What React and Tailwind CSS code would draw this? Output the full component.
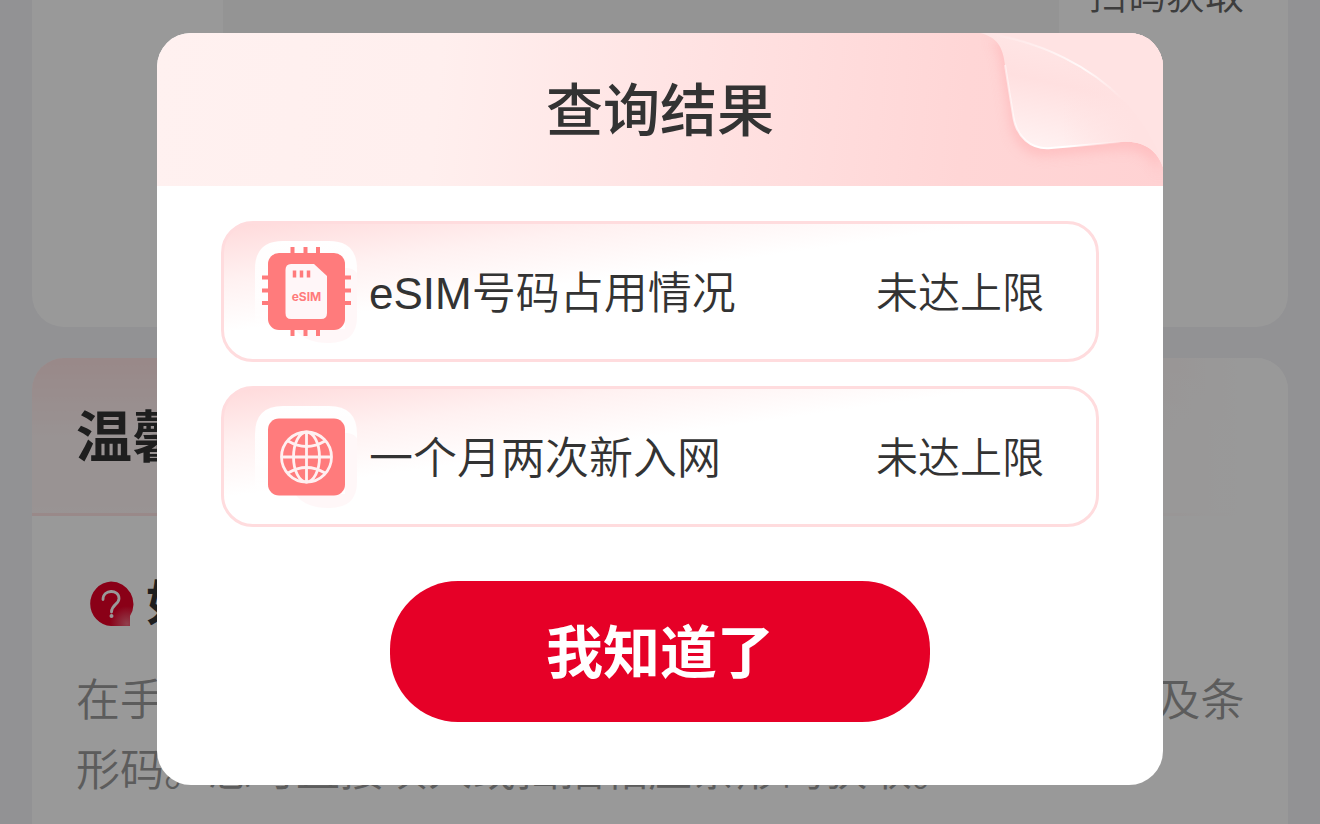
import React, { useState } from 'react';

const results = [
  { id: 'esim', label: 'eSIM号码占用情况', status: '未达上限', Icon: EsimIcon },
  { id: 'network', label: '一个月两次新入网', status: '未达上限', Icon: GlobeIcon },
];

function IconPlate() {
  return (
    <>
      <path d="M28 0H74Q102 0 102 28V76Q102 102 74 102H28Q0 102 0 76V28Q0 0 28 0Z" fill="url(#plate)" />
      <path d="M90 27Q98 27 102 32V76Q102 102 74 102Q50 102 40 88H90Z" fill="#ffeff1" opacity="0.5" />
    </>
  );
}

function EsimIcon() {
  return (
    <svg viewBox="0 0 102 102" className="size-[102px] shrink-0" aria-hidden="true">
      <defs>
        <linearGradient id="plate" x1="0" y1="0" x2="0" y2="1">
          <stop offset="0" stopColor="#fff" />
          <stop offset="0.55" stopColor="#fff" stopOpacity="0.85" />
          <stop offset="1" stopColor="#fff" stopOpacity="0" />
        </linearGradient>
      </defs>
      <IconPlate />
      <g stroke="#ff7b7c" strokeWidth="4">
        <path d="M37.5 6v89M50.5 6v89M63 6v89" />
        <path d="M7 36.5h89M7 49.5h89M7 62h89" />
      </g>
      <rect x="13" y="12" width="77" height="77" rx="11" fill="#ff7b7c" />
      <path d="M36 23H59L72 35V72Q72 78 66 78H36Q30.500 78 30.500 72V29Q30.500 23 36 23Z" fill="#fff6f8" />
      <path d="M39.500 29.500v7M46.500 29.500v7M53.500 29.500v7" stroke="#ff7b7c" strokeWidth="3.500" />
      <text x="51.500" y="60" textAnchor="middle" fill="#ff7b7c" fontSize="12" fontWeight="700" fontFamily="Inter, sans-serif">
        eSIM
      </text>
    </svg>
  );
}

function GlobeIcon() {
  return (
    <svg viewBox="0 0 102 102" className="size-[102px] shrink-0" aria-hidden="true">
      <IconPlate />
      <rect x="13" y="12.500" width="77" height="77" rx="11" fill="#ff7b7c" />
      <g fill="none" stroke="#fff0f1" strokeWidth="2.800">
        <circle cx="51.500" cy="51" r="25" />
        <ellipse cx="51.500" cy="51" rx="13" ry="25" />
        <path d="M51.500 26v50M26.500 51h50" />
        <path d="M33 35Q51.500 46 70 35M33 67Q51.500 56 70 67" />
      </g>
    </svg>
  );
}

function QuestionIcon() {
  return (
    <svg viewBox="0 0 46 46" className="size-[46px] shrink-0" aria-hidden="true">
      <defs>
        <radialGradient id="bubble" cx="0.850" cy="0.950" r="0.400">
          <stop offset="0" stopColor="#f06a80" />
          <stop offset="1" stopColor="#e60027" />
        </radialGradient>
      </defs>
      <path d="M23 0.500A22.500 22.500 0 0 1 42 35V45H23A22.300 22.300 0 0 1 23 0.500Z" fill="url(#bubble)" />
      <path d="M15 18.500C15 8 31 8 31 17.500C31 23.500 23.500 23.500 23.500 31" fill="none" stroke="#fff" strokeWidth="2.800" strokeLinecap="round" />
      <circle cx="23.500" cy="35" r="2" fill="#fff" />
    </svg>
  );
}

// Folded paper corner in the top right of the dialog header
function PageCurl() {
  return (
    <svg viewBox="0 0 200 153" className="absolute right-0 top-0 h-full w-[200px]" aria-hidden="true">
      <defs>
        <linearGradient id="flap" x1="0.600" y1="0" x2="0.300" y2="1">
          <stop offset="0" stopColor="#ffe8e8" />
          <stop offset="0.400" stopColor="#ffe0e0" />
          <stop offset="1" stopColor="#fff7f7" />
        </linearGradient>
        <linearGradient id="flapRight" x1="0" y1="0" x2="1" y2="0">
          <stop offset="0.450" stopColor="#ffe1e1" stopOpacity="0" />
          <stop offset="0.850" stopColor="#ffe2e2" />
        </linearGradient>
        <linearGradient id="edge" x1="0" y1="0" x2="1" y2="0">
          <stop offset="0" stopColor="#fff" stopOpacity="0" />
          <stop offset="0.700" stopColor="#fff" stopOpacity="0.8" />
          <stop offset="1" stopColor="#fff" stopOpacity="0" />
        </linearGradient>
        <linearGradient id="rim" x1="0" y1="0" x2="1" y2="0">
          <stop offset="0" stopColor="#fff" stopOpacity="0.5" />
          <stop offset="0.200" stopColor="#fff" />
          <stop offset="0.400" stopColor="#fff" />
          <stop offset="0.750" stopColor="#fff" stopOpacity="0" />
        </linearGradient>
        <filter id="soft" x="-20%" y="-20%" width="140%" height="140%">
          <feGaussianBlur stdDeviation="6" />
        </filter>
      </defs>
      <path
        d="M30 0C38 8 40 14 42 32L50 82C53 104 68 117 88 115L158 109C180 107 194 117 200 134V0Z"
        fill="#ffb4b6"
        opacity="0.600"
        transform="translate(-3 8)"
        filter="url(#soft)"
      />
      <path d="M17 0C34 4 40 14 42 32L50 82C53 104 68 117 88 115L158 109C180 107 194 117 200 134V0Z" fill="url(#flap)" />
      <path d="M17 0C34 4 40 14 42 32L50 82C53 104 68 117 88 115L158 109C180 107 194 117 200 134V0Z" fill="url(#flapRight)" />
      <path d="M30 0C80 8 128 34 160 67C180 88 192 108 200 134V0Z" fill="#ffe3e3" />
      <path d="M30 2C80 10 128 34 160 67" fill="none" stroke="url(#edge)" strokeWidth="2" />
      <path d="M42 32L50 82C53 104 68 117 88 115L158 109C180 107 194 117 200 134" fill="none" stroke="url(#rim)" strokeWidth="2" />
    </svg>
  );
}

function ResultRow({ label, status, Icon }) {
  return (
    <li className="flex h-[141px] items-center rounded-[32px] border-3 border-[#ffdcde] bg-[linear-gradient(172deg,#ffdadb_0%,#fff1f1_22%,#ffffff_42%)] pl-[31px] pr-[52px] text-[#333333]">
      <Icon />
      <span className="ml-3 pt-1 text-[44px] font-[350] leading-none">{label}</span>
      <span className="ml-auto pt-1 text-[42px] font-[350] leading-none">{status}</span>
    </li>
  );
}

function ResultDialog({ onClose }) {
  return (
    <div className="fixed inset-0 flex items-start justify-center bg-black/40 pt-[33px]">
      <section role="dialog" aria-modal="true" aria-labelledby="dialog-title" className="w-full max-w-[1006px] overflow-hidden rounded-[34px] bg-white">
        <header className="relative flex h-[153px] items-center justify-center bg-[linear-gradient(95deg,#fff1f0_0%,#ffefee_28%,#ffe3e3_52%,#ffd6d6_80%,#ffd2d3_100%)]">
          <PageCurl />
          <h2 id="dialog-title" className="relative pt-1 text-[57px] font-medium leading-none text-[#333333]">
            查询结果
          </h2>
        </header>
        <div className="px-16 pb-[63px] pt-[35px]">
          <ul className="flex flex-col gap-6">
            {results.map((item) => (
              <ResultRow key={item.id} {...item} />
            ))}
          </ul>
          <button
            type="button"
            onClick={onClose}
            className="mx-auto mt-[54px] block h-[141px] w-full max-w-[540px] rounded-[68px] bg-[#e60027] pt-1 text-[57px] font-bold leading-none text-white"
          >
            我知道了
          </button>
        </div>
      </section>
    </div>
  );
}

function App() {
  const [open, setOpen] = useState(true);

  return (
    <div className="h-screen overflow-hidden bg-[#f3f3f7] font-['Liberation_Sans','Noto_Sans_CJK_SC',sans-serif]">
      <main className="flex flex-col gap-[31px] px-8">
        <section className="flex h-[327px] overflow-hidden rounded-b-[32px] bg-white">
          <div className="w-[191px]" />
          <div className="h-[200px] flex-1 bg-[#f7f7f7]" />
          <div className="w-[229px] pl-[29px]">
            <p className="-mt-6 whitespace-nowrap text-[39px] font-[350] leading-[39px] text-[#666666]">扫码获取</p>
          </div>
        </section>

        <section className="overflow-hidden rounded-t-[32px] bg-white">
          <div className="bg-[linear-gradient(90deg,#ffe4e4_0%,#ffe4e4_20%,#fffafa_90%,#ffffff_96%)]">
            <div className="flex h-[155px] items-center bg-[linear-gradient(180deg,#ffffff00_0%,#ffffffa0_50%,#ffffffb0_100%)] pl-11 pt-1">
              <h2 className="text-[56px] font-bold leading-none text-[#333333]">温馨提示</h2>
            </div>
            <div className="h-[3px]" />
          </div>
          <div className="px-11 pb-10 pt-16">
            <h3 className="flex items-center gap-3 pl-3 text-[48px] font-bold leading-[48px] text-[#333333]">
              <QuestionIcon />
              如何获取EID及条形码?
            </h3>
            <p className="mt-[38px] whitespace-nowrap text-[44px] font-[350] leading-[70px] text-[#999999]">
              在手机拨号界面中直接输入 *#06#，即可查询设备的EID及条
              <br />
              形码。您可直接填入或扫描相应条形码获取。
            </p>
          </div>
        </section>
      </main>

      {open && <ResultDialog onClose={() => setOpen(false)} />}
    </div>
  );
}

export default App;
